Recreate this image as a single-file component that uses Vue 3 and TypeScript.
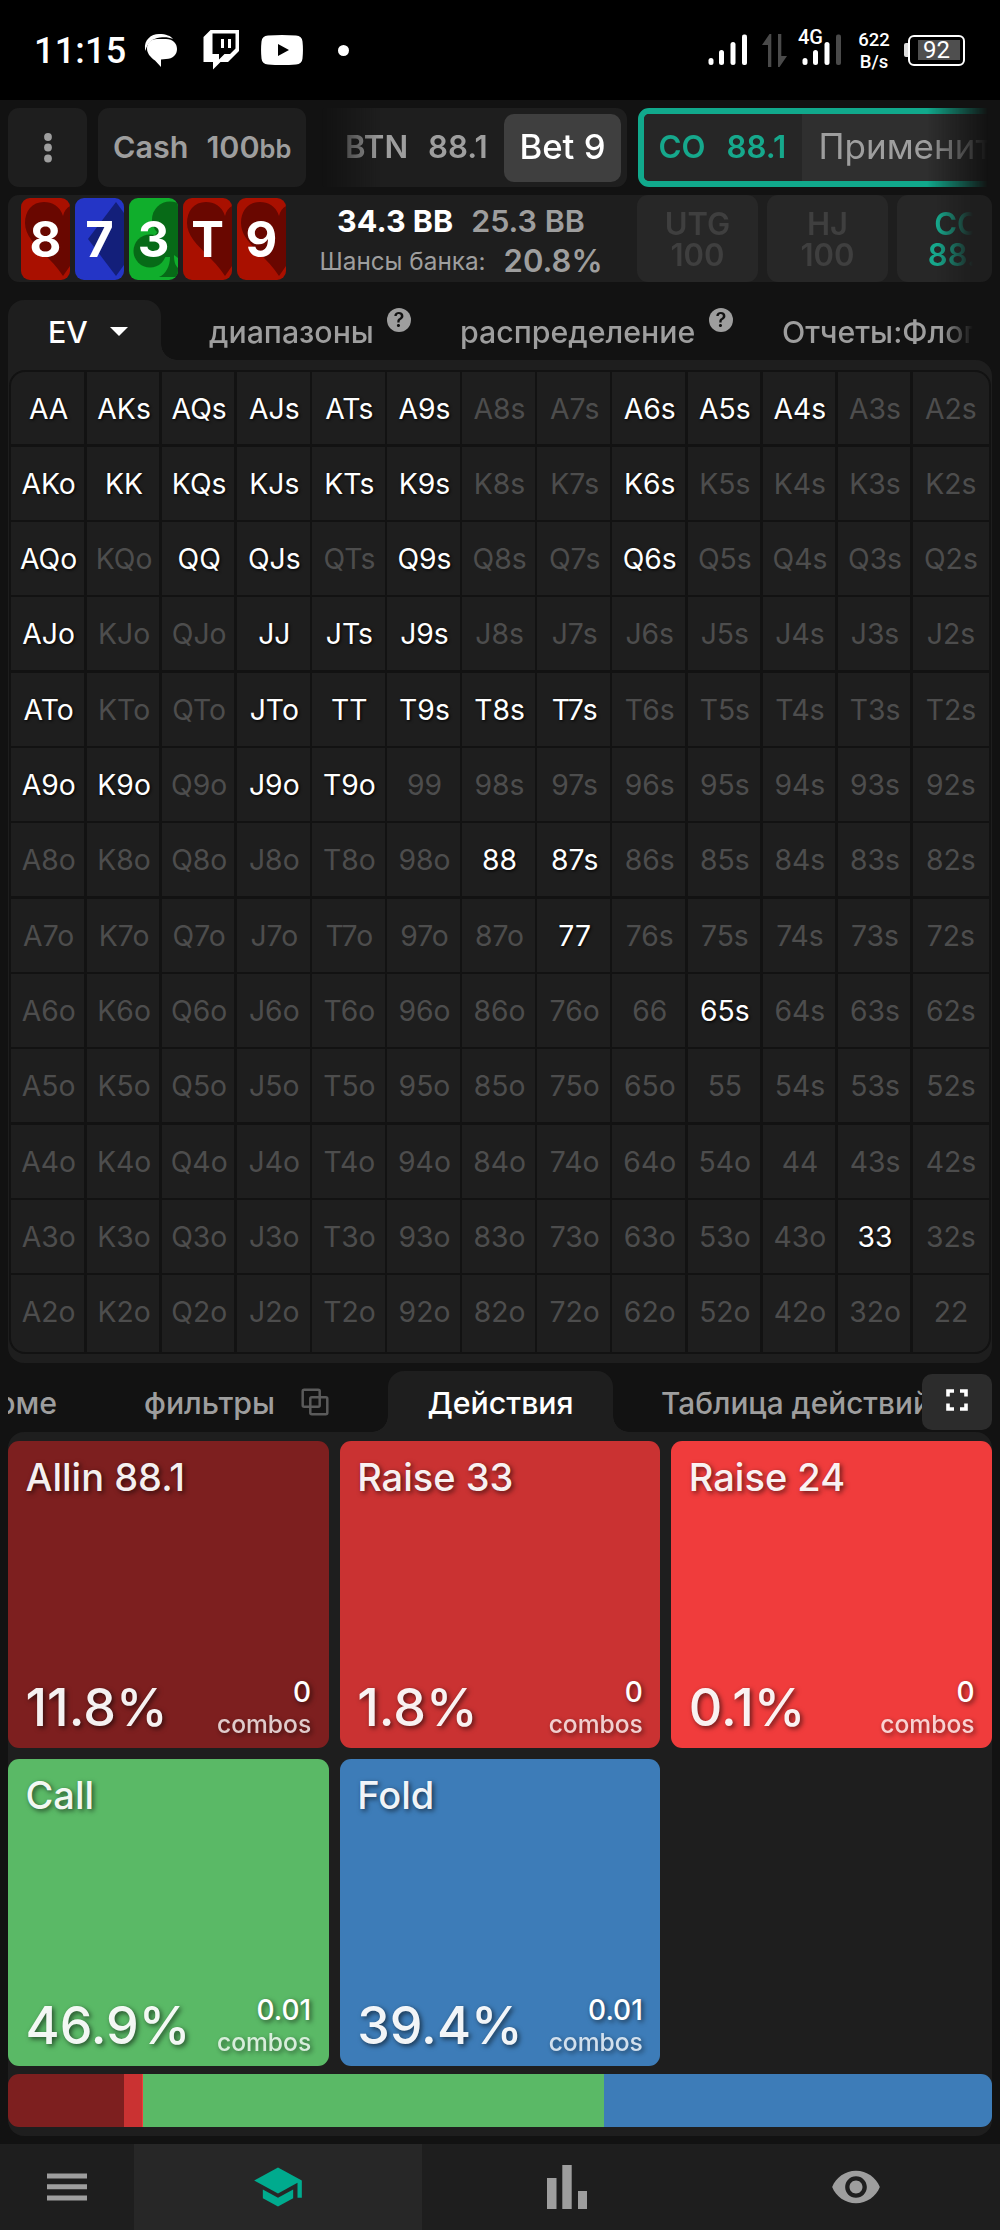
<script setup lang="ts">
interface BoardCard { rank: string; suit: 'heart' | 'diamond' | 'club' }
interface Action { name: string; pct: number; combos: string; color: string }

const board: BoardCard[] = [
  { rank: '8', suit: 'heart' },
  { rank: '7', suit: 'diamond' },
  { rank: '3', suit: 'club' },
  { rank: 'T', suit: 'heart' },
  { rank: '9', suit: 'heart' },
]

const ranks = 'AKQJT98765432'.split('')
const active = new Set(
  ('AA AKs AQs AJs ATs A9s A6s A5s A4s AKo KK KQs KJs KTs K9s K6s AQo QQ QJs Q9s Q6s ' +
    'AJo JJ JTs J9s ATo JTo TT T9s T8s T7s A9o K9o J9o T9o 88 87s 77 65s 33').split(' '),
)
const hands = ranks.flatMap((a, r) =>
  ranks.map((b, c) => {
    const label = r === c ? a + b : c > r ? a + b + 's' : b + a + 'o'
    return { label, on: active.has(label) }
  }),
)

const actions: Action[] = [
  { name: 'Allin 88.1', pct: 11.8, combos: '0', color: '#7d1f1f' },
  { name: 'Raise 33', pct: 1.8, combos: '0', color: '#ca3232' },
  { name: 'Raise 24', pct: 0.1, combos: '0', color: '#f03c3c' },
  { name: 'Call', pct: 46.9, combos: '0.01', color: '#5ab966' },
  { name: 'Fold', pct: 39.4, combos: '0.01', color: '#3d7cb8' },
]
</script>

<template>
  <div class="app">
    <header class="status">
      <span class="clock">11:15</span>
      <svg class="i-chat" width="34" height="34" viewBox="0 0 34 34">
        <path d="M1 15C0 6 7 0 15 0c7 0 12 2 14 5-4-2-9-2-13-1.500C8 4.500 3 9 1.500 17z" fill="#fff" />
        <path d="M13 5h9c7 0 11 4.500 11 10s-4 10-11 10l-5 .5V33l-6-6.500C6 23 3 19 3 14.500 3 9 7 5 13 5z" fill="#fff" />
      </svg>
      <svg class="i-twitch" width="36" height="40" viewBox="0 0 36 40">
        <path fill="#fff" fill-rule="evenodd" d="M7.500 0H36v21L25 32h-7.500L10 39.500V32H0.500V7zM9.500 3.500V24h6.500v5.500l5.500-5.500H27l5.500-5.500V3.500zM18 9h3v9h-3zM25 9h3v9h-3z" />
      </svg>
      <svg class="i-yt" width="42" height="30" viewBox="0 0 42 30">
        <path fill="#fff" fill-rule="evenodd" d="M7 .6Q21-.5 35 .6q6 .4 6.500 6 .9 8.400 0 16.800-.5 5.600-6.500 6-14 1.100-28 0-6-.4-6.500-6-.9-8.400 0-16.800Q1 1 7 .6zM17 9v12l11-6z" />
      </svg>
      <i class="dot"></i>
      <div class="right">
        <svg width="40" height="32" viewBox="0 0 40 32" fill="#fff">
          <rect x="0.500" y="24" width="5" height="7" rx="2.500" /><rect x="11" y="16" width="5" height="15" rx="2.500" />
          <rect x="22.500" y="8" width="5" height="23" rx="2.500" /><rect x="34" y="0.500" width="5" height="30.500" rx="2" />
        </svg>
        <svg class="i-data" width="26" height="34" viewBox="0 0 26 34" fill="#4a4a4a">
          <path d="M9.300 0v33H6V11H0L7.500 0zM16 0h3.300v22H25l-7.500 11H16z" />
        </svg>
        <div class="net">
          <span class="g4">4G</span>
          <svg width="40" height="32" viewBox="0 0 40 32" fill="#fff">
            <rect x="0.500" y="24" width="5" height="7" rx="2.500" /><rect x="11" y="16" width="5" height="15" rx="2.500" />
            <rect x="22.500" y="8" width="5" height="23" rx="2.500" /><rect x="34" y="0.500" width="5" height="30.500" rx="2" fill="#4a4a4a" />
          </svg>
        </div>
        <div class="speed">622<br />B/s</div>
        <i class="nub"></i>
        <div class="battery"><span>92</span></div>
      </div>
    </header>

    <section class="row-actions">
      <div class="chip more">
        <svg width="10" height="32" viewBox="0 0 10 32" fill="#9e9e9e"><circle cx="5" cy="5" r="3.900" /><circle cx="5" cy="15.500" r="3.900" /><circle cx="5" cy="26.500" r="3.900" /></svg>
      </div>
      <div class="chip cash"><b>Cash</b><b>100<small>bb</small></b></div>
      <div class="history">
        <div class="step btn-step"><b>BTN</b><b>88.1</b><span class="bet">Bet 9</span></div>
        <div class="step co-step"><div class="who"><b>CO</b><b>88.1</b></div><div class="apply">Применить</div></div>
      </div>
    </section>

    <section class="row-board">
      <div class="cards">
        <div v-for="c in board" :key="c.rank" class="card" :class="c.suit">
          <svg width="49" height="82" viewBox="0 0 49 82">
            <path v-if="c.suit === 'heart'" d="M42 18C39 8 31 4 23 4 11 4 4 13 4 25c0 19 23 30 38 53l7-10V8c-3.500 2-6 5.500-7 10z" />
            <path v-else-if="c.suit === 'diamond'" d="M41 4L13 41l28 37 8-11V15z" />
            <g v-else>
              <circle cx="41" cy="21.500" r="18" /><circle cx="21" cy="53" r="16.500" />
              <path d="M29 33h20v27l-4-3c0 6 1 10 4 13v9H30c7-3 11-11 11-20h-8L24 40z" />
            </g>
          </svg>
          <span>{{ c.rank }}</span>
        </div>
      </div>
      <div class="pot">
        <div class="line"><b class="w">34.3 BB</b><b>25.3 BB</b></div>
        <div class="line odds"><span>Шансы банка:</span><b>20.8%</b></div>
      </div>
      <div class="seats">
        <div class="seat">UTG<br />100</div>
        <div class="seat">HJ<br />100</div>
        <div class="seat co">CO<br />88.1</div>
      </div>
    </section>

    <nav class="tabs top-tabs">
      <div class="tab ev">EV<svg width="18" height="9" viewBox="0 0 18 9"><path d="M0 0h18L9 9z" fill="#fff" /></svg></div>
      <div class="links">
        <span class="t1">диапазоны</span><i class="help">?</i>
        <span class="t2">распределение</span><i class="help">?</i>
        <span class="t3">Отчеты:Флоп</span>
      </div>
    </nav>
    <section class="matrix-panel">
      <div class="matrix">
        <div v-for="h in hands" :key="h.label" class="cell" :class="{ on: h.on }">{{ h.label }}</div>
      </div>
    </section>

    <nav class="tabs low-tabs">
      <div class="side left"><span class="sum">Резюме</span><span class="flt">фильтры</span>
        <svg width="28" height="28" viewBox="0 0 28 28" fill="none" stroke="#5a5a5a" stroke-width="2.500"><rect x="1.700" y="1.700" width="17" height="17" rx="1.500" /><rect x="9.300" y="9.300" width="17" height="17" rx="1.500" /></svg>
      </div>
      <div class="tab acts">Действия</div>
      <div class="side rest">Таблица действий</div>
      <button class="full">
        <svg width="22" height="22" viewBox="0 0 22 22" fill="none" stroke="#fff" stroke-width="3.600"><path d="M2 7.500V2h6M14 2h6v5.500M20 14.500V20h-6M8 20H2v-5.500" /></svg>
      </button>
    </nav>
    <section class="actions-panel">
      <div class="tiles">
        <div v-for="a in actions" :key="a.name" class="tile" :style="{ background: a.color }">
          <div class="name">{{ a.name }}</div>
          <div class="foot">
            <div class="pct">{{ a.pct.toFixed(1) }}%</div>
            <div class="cmb"><b>{{ a.combos }}</b><span>combos</span></div>
          </div>
        </div>
      </div>
      <div class="bar">
        <i v-for="a in actions" :key="a.name" :style="{ flexGrow: a.pct, background: a.color }"></i>
      </div>
    </section>

    <footer class="nav">
      <div class="n0">
        <svg width="40" height="28" viewBox="0 0 40 28" fill="#9e9e9e"><path d="M0 .5h40v5H0zM0 11.300h40v5H0zM0 22.400h40v5H0z" /></svg>
      </div>
      <div class="n1">
        <svg width="52" height="52" viewBox="0 0 24 24" fill="#00ab8e"><path d="M5 13.180v4L12 21l7-3.820v-4L12 17l-7-3.820zM12 3L1 9l11 6 9-4.910V17h2V9L12 3z" /></svg>
      </div>
      <div>
        <svg width="40" height="44" viewBox="0 0 40 44" fill="#9e9e9e"><path d="M0 13h9.500v31H0zM15.300 0h9.400v44h-9.400zM31 26h9v18h-9z" /></svg>
      </div>
      <div>
        <svg width="52" height="52" viewBox="0 0 24 24" fill="#9e9e9e"><path d="M12 4.500C7 4.500 2.730 7.610 1 12c1.730 4.390 6 7.500 11 7.500s9.270-3.110 11-7.500c-1.730-4.390-6-7.500-11-7.500zM12 17c-2.760 0-5-2.240-5-5s2.240-5 5-5 5 2.240 5 5-2.240 5-5 5zm0-8c-1.660 0-3 1.340-3 3s1.340 3 3 3 3-1.340 3-3-1.340-3-3-3z" /></svg>
      </div>
    </footer>
  </div>
</template>

<style>
body { background: #121212; }
</style>

<style scoped>
.app { width: 1000px; height: 2230px; overflow: hidden; background: #121212; color: #9e9e9e; font: 400 30px/1 Inter, sans-serif; display: flex; flex-direction: column; }
.app * { box-sizing: border-box; }
svg { display: block; flex: none; }
b { font-weight: 600; }
i { font-style: normal; }

.status { height: 100px; flex: none; background: #000; color: #fff; display: flex; align-items: center; padding-left: 34px; font-family: Roboto, sans-serif; }
.clock { font-size: 36px; font-weight: 500; line-height: 40px; width: 110px; white-space: nowrap; margin-top: 2px; letter-spacing: 0.2px; }
.i-chat { margin-top: 2px; }
.i-twitch { margin-left: 25px; }
.i-yt { margin-left: 22px; }
.dot { width: 11px; height: 11px; border-radius: 50%; background: #fff; margin-left: 35px; }
.right { margin-left: auto; padding-right: 35px; display: flex; align-items: center; }
.i-data { margin: 2px 0 0 14px; }
.net { position: relative; margin-left: 14px; }
.g4 { position: absolute; left: -4px; top: -7px; font-size: 20px; line-height: 20px; font-weight: 500; }
.speed { width: 40px; margin: 1px 0 0 12px; font-size: 18.500px; line-height: 22px; text-align: center; font-weight: 500; }
.nub { width: 4px; height: 14px; border-radius: 2px 0 0 2px; background: #ddd; margin-left: 10px; }
.battery { width: 57px; height: 31px; border: 2.500px solid #fff; border-radius: 6px; padding: 3px; }
.battery span { display: block; margin-left: 5px; height: 20px; background: #4f4f4f; font-size: 24px; line-height: 20px; padding-left: 5px; }

.row-actions { flex: none; height: 79px; margin: 8px 8px 0; display: flex; }
.chip { background: #1e1e1e; border-radius: 11px; display: flex; align-items: center; }
.more { width: 79px; justify-content: center; margin-right: 11px; }
.cash { width: 208px; padding-left: 15px; gap: 18px; white-space: nowrap; font-size: 30.500px; }
.cash small { font-size: 25.500px; }
.history { flex: 1; margin: 0 0 0 11px; display: flex; overflow: hidden; -webkit-mask-image: linear-gradient(90deg, transparent 0, transparent 5px, #000 64px, #000 610px, transparent 671px); mask-image: linear-gradient(90deg, transparent 0, transparent 5px, #000 64px, #000 610px, transparent 671px); }
.step { flex: none; display: flex; align-items: center; white-space: nowrap; font-size: 31.200px; }
.btn-step { width: 310px; background: #1e1e1e; border-radius: 11px; padding-left: 28px; margin-right: 11px; }
.btn-step b:first-child { width: 83px; }
.btn-step b:nth-child(2) { width: 76px; }
.bet { width: 117px; height: 68px; border-radius: 10px; background: #3f3f3f; color: #fff; font-size: 34.700px; font-weight: 500; line-height: 64px; text-align: center; }
.co-step { width: 400px; border: 6px solid #11a98c; border-radius: 11px; align-items: stretch; overflow: hidden; background: #2f2f2f; }
.who { width: 158px; background: #262626; color: #16a88c; display: flex; padding-left: 14.500px; line-height: 67px; }
.who b:first-child { width: 68px; }
.apply { padding-left: 16.500px; font-size: 35px; line-height: 64px; }

.row-board { flex: none; height: 87px; margin: 8px 8px 0; background: #1e1e1e; border-radius: 11px; display: flex; overflow: hidden; }
.cards { display: flex; gap: 5px; padding: 3px 0 0 13px; width: 291px; }
.card { position: relative; width: 49px; height: 82px; border-radius: 9px; overflow: hidden; }
.card span { position: absolute; inset: 0; color: #fff; font-size: 49px; font-weight: 700; line-height: 83px; text-align: center; }
.heart { background: #a91000; fill: #690700; }
.diamond { background: #2435c6; fill: #131f7a; }
.club { background: #10ae2c; fill: #076a17; }
.pot { width: 338px; padding-top: 8px; }
.line { display: flex; justify-content: center; gap: 18px; line-height: 35px; white-space: nowrap; padding-right: 14px; font-size: 30.500px; }
.line .w { color: #fff; font-weight: 700; }
.odds { line-height: 46px; font-size: 31px; }
.odds span { font-size: 24.300px; }
.seats { flex: 1; display: flex; gap: 9px; overflow: hidden; -webkit-mask-image: linear-gradient(90deg, #000 300px, transparent 336px); mask-image: linear-gradient(90deg, #000 300px, transparent 336px); }
.seat { flex: none; width: 121px; height: 87px; border-radius: 11px; background: #272727; color: #3f3f3f; font-weight: 600; font-size: 31px; line-height: 31px; padding-top: 13px; text-align: center; }
.seat.co { color: #16a88c; }

.tabs { flex: none; display: flex; margin: 0 8px; white-space: nowrap; position: relative; }
.top-tabs { height: 60px; margin-top: 18px; font-size: 30.300px; font-weight: 500; }
.tab { position: relative; background: #1e1e1e; border-radius: 16px 16px 0 0; color: #fff; }
.tab::after { content: ''; position: absolute; left: 100%; bottom: 0; width: 16px; height: 16px; background: radial-gradient(circle at 100% 0, transparent 15.500px, #1e1e1e 16px); }
.acts::before { content: ''; position: absolute; right: 100%; bottom: 0; width: 16px; height: 16px; background: radial-gradient(circle at 0 0, transparent 15.500px, #1e1e1e 16px); }
.ev { width: 153px; display: flex; align-items: center; padding-left: 40px; gap: 22px; line-height: 62px; padding-top: 3px; }
.links { flex: 1; display: flex; line-height: 64px; overflow: hidden; -webkit-mask-image: linear-gradient(90deg, #000 780px, transparent 812px); mask-image: linear-gradient(90deg, #000 780px, transparent 812px); }
.t1 { margin-left: 48px; width: 178px; }
.t2 { margin-left: 49px; width: 249px; }
.t3 { margin-left: 49px; }
.help { flex: none; width: 24px; height: 24px; border-radius: 50%; background: #9e9e9e; color: #121212; font-size: 20px; font-weight: 600; line-height: 24px; text-align: center; margin-top: 8px; }
.matrix-panel { flex: none; height: 1003px; margin: 0 8px; background: #1e1e1e; border-radius: 0 16px 16px 16px; padding: 9.500px 1px 0; }
.matrix { height: 984px; border: 2px solid #121212; border-radius: 16px; overflow: hidden; background: #121212; display: grid; grid-template-columns: 73.300px repeat(11, 72.600px) 1fr; grid-template-rows: repeat(12, 72.830px) 1fr; gap: 2.500px; }
.cell { background: #1e1e1e; color: #4d4d4d; font-size: 28.300px; line-height: 74px; text-align: center; padding-left: 2px; }
.cell:nth-child(13n) { padding-left: 0; }
.cell:nth-child(n + 157) { line-height: 75px; }
.cell.on { color: #fff; text-shadow: 1px 1px 3px #000; }

.low-tabs { height: 61px; margin-top: 8px; line-height: 65px; font-size: 30.300px; font-weight: 500; }
.side { overflow: hidden; display: flex; }
.left { width: 380px; position: relative; }
.sum { width: 49px; display: flex; justify-content: flex-end; margin-right: 87px; }
.flt { width: 157px; }
.left svg { margin-top: 17px; }
.acts { width: 225px; text-align: center; }
.rest { width: 379px; padding-left: 48px; font-size: 29.800px; }
.full { position: absolute; right: 0; top: 3px; width: 70px; height: 56px; padding: 0; border: 0; border-radius: 10px; background: #2c2c2c; display: flex; align-items: center; justify-content: center; }
.full svg { margin-top: -4px; }

.actions-panel { flex: none; height: 704px; margin: 0 8px; background: #1e1e1e; border-radius: 16px; padding-top: 9px; }
.tiles { display: grid; grid-template-columns: repeat(3, 1fr); grid-template-rows: 306.500px 307.500px; gap: 11px; }
.tile { border-radius: 11px; padding: 17px 17.500px 14px 17.500px; color: rgba(255, 255, 255, .94); display: flex; flex-direction: column; justify-content: space-between; text-shadow: 2px 2px 5px rgba(0, 0, 0, .6); white-space: nowrap; }
.name { font-size: 38px; line-height: 38px; font-weight: 500; }
.foot { display: flex; justify-content: space-between; align-items: flex-end; }
.pct { font-size: 52px; line-height: 53px; font-weight: 500; }
.cmb { display: flex; flex-direction: column; align-items: flex-end; margin-bottom: -5px; }
.cmb b { font-size: 28px; line-height: 33px; font-weight: 500; color: #fff; }
.cmb span { font-size: 24.600px; line-height: 30px; font-weight: 500; opacity: .82; }
.bar { height: 53px; margin-top: 8px; border-radius: 11px; overflow: hidden; display: flex; }
.bar i { flex-basis: 0; }

.nav { flex: none; height: 86px; margin-top: 8px; background: #1e1e1e; display: flex; }
.nav div { flex: 1; display: flex; align-items: center; justify-content: center; }
.nav .n0 { flex: 0 0 133.500px; }
.nav .n1 { background: #272727; }
</style>
